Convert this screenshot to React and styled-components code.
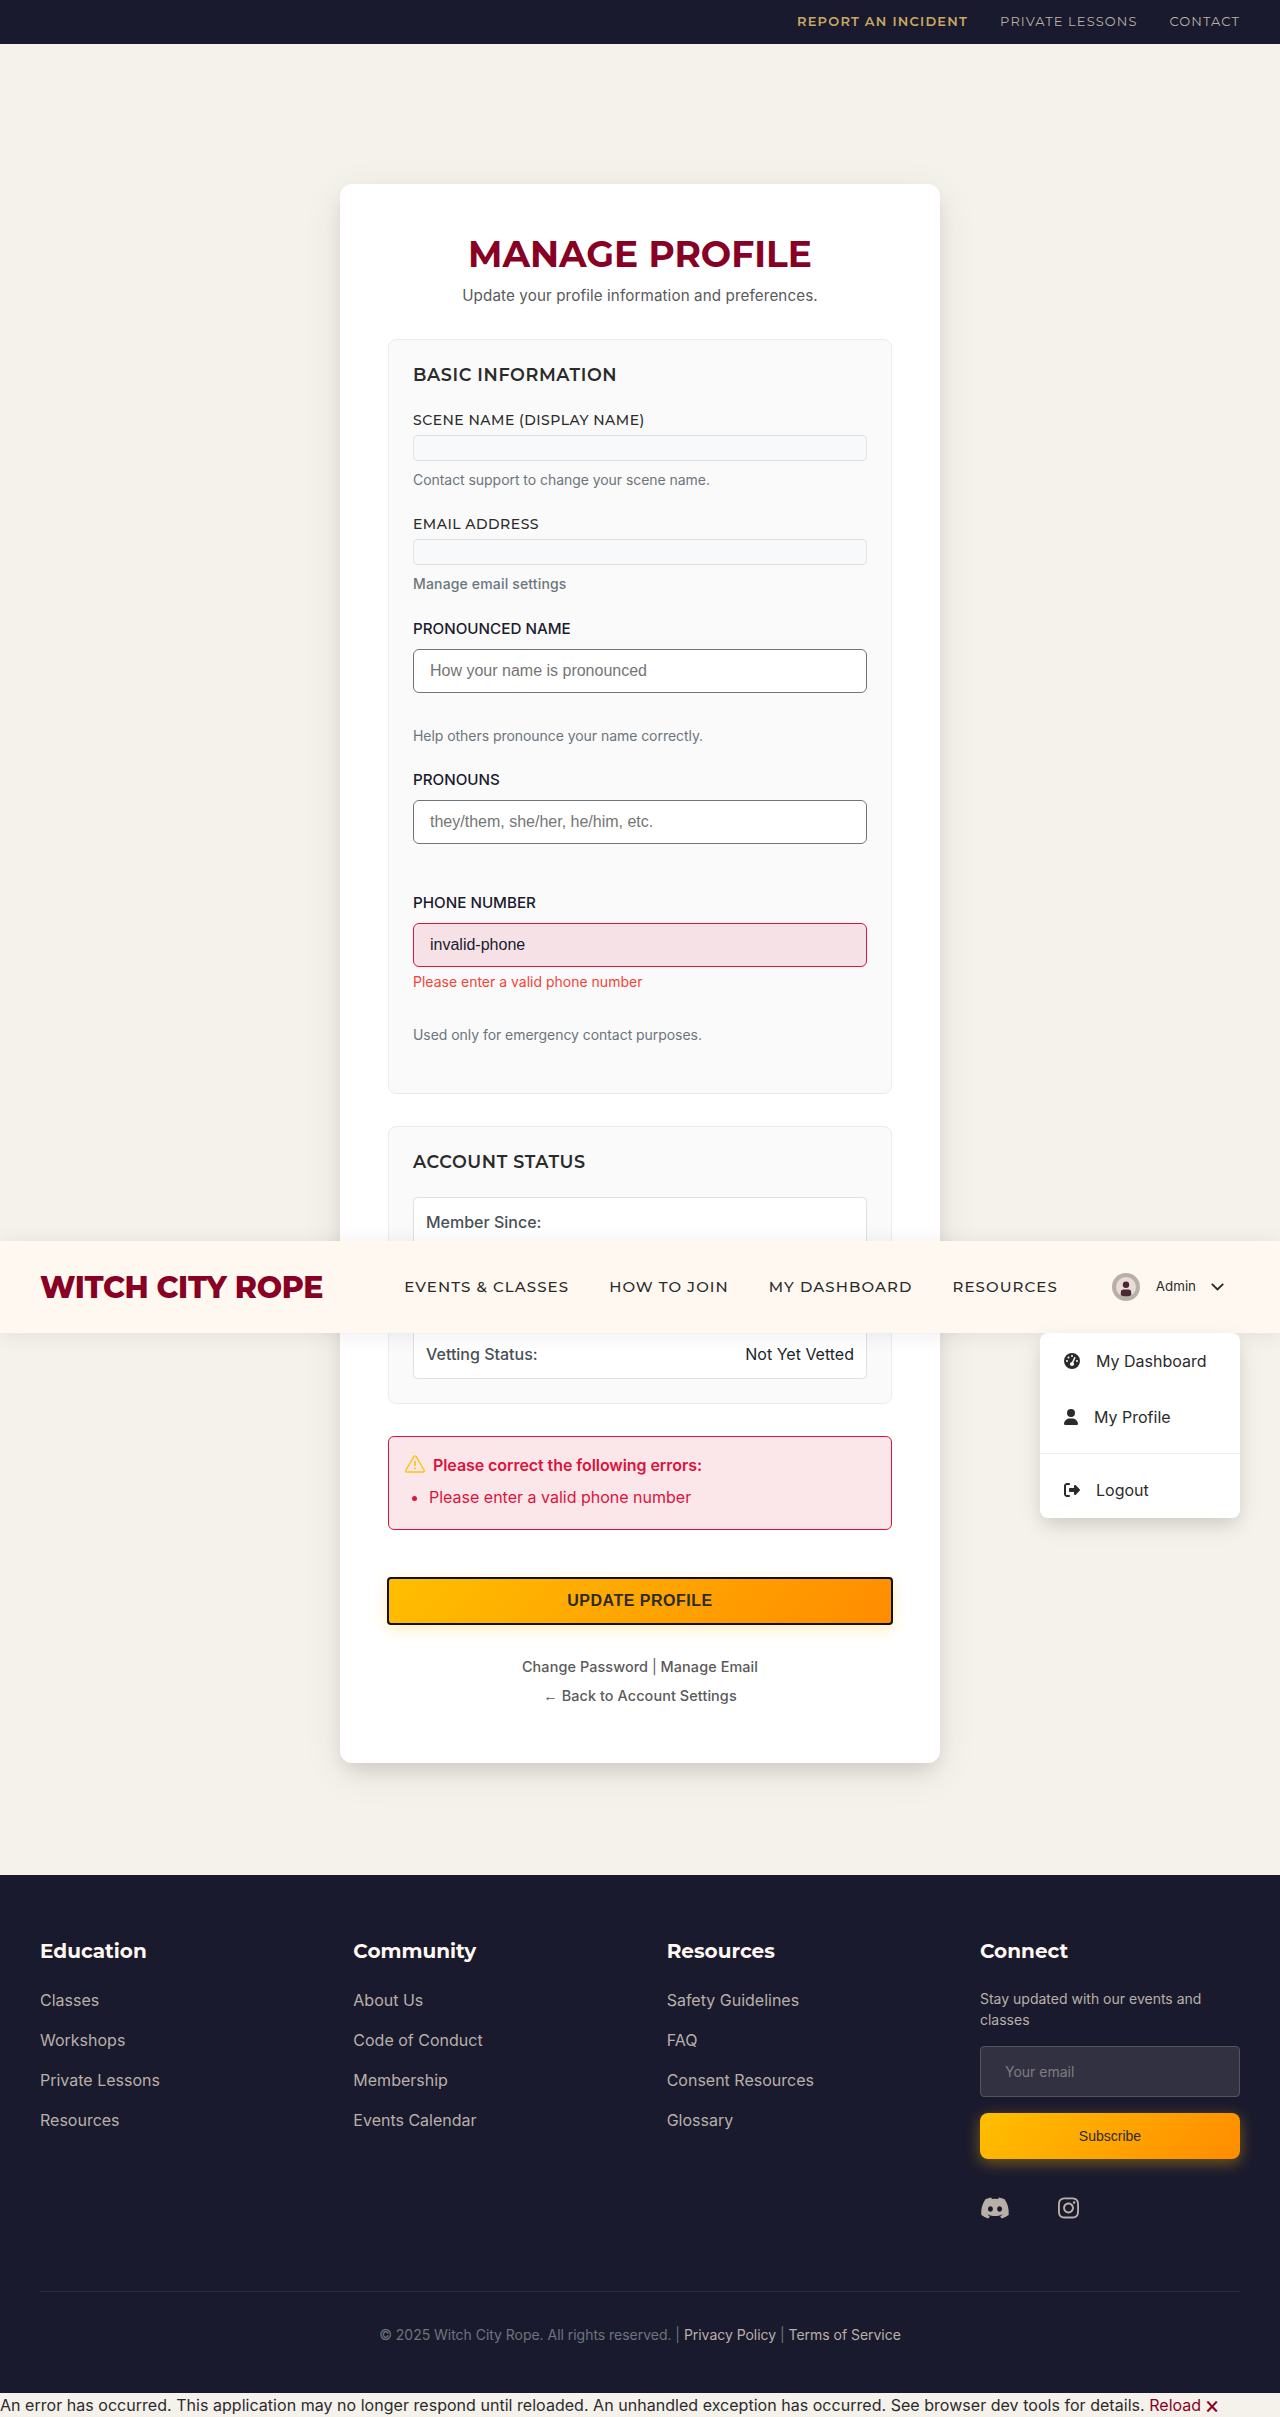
import React from 'react';
import styled, { createGlobalStyle } from 'styled-components';
import { FaGaugeHigh, FaUser, FaRightFromBracket, FaDiscord, FaInstagram } from 'react-icons/fa6';

const color = {
  burgundy: '#880124',
  midnight: '#1a1a2e',
  ivory: '#fff8f0',
  cream: '#f5f1eb',
  charcoal: '#2b2b2b',
  stone: '#b8b0a8',
  muted: '#6c757d',
  crimson: '#dc143c',
};
const heading = "Montserrat, 'Open Sans', sans-serif";
const bodyFont = "Inter, 'Open Sans', sans-serif";
const control = "'Liberation Sans', Arial, sans-serif";

const GlobalStyle = createGlobalStyle`
  *, *::before, *::after { box-sizing: border-box; }
  body { margin: 0; background: ${color.cream}; color: ${color.charcoal}; font: 400 16px/1.6 ${bodyFont}; }
  h1, h2, h3, p, ul { margin: 0; padding: 0; }
  a { color: inherit; text-decoration: none; }
`;

const Page = styled.div`
  position: relative;
  display: flex;
  flex-direction: column;
  min-height: 2417px;
  overflow: hidden;
`;

const UtilityBar = styled.div`
  height: 44px;
  padding: 0 40px 2px;
  display: flex;
  align-items: center;
  justify-content: flex-end;
  gap: 32px;
  background: ${color.midnight};
`;
const UtilityLink = styled.a`
  font: ${p => (p.$strong ? 600 : 400)} 13px/20px ${heading};
  letter-spacing: ${p => (p.$strong ? 1.22 : 1.08)}px;
  text-transform: uppercase;
  color: ${p => (p.$strong ? '#c9a961' : color.stone)};
`;

const Main = styled.main`
  display: flex;
  justify-content: center;
  padding: 140px 0 112px;
`;
const Card = styled.section`
  width: 600px;
  height: 1579px;
  padding: 48px;
  display: flex;
  flex-direction: column;
  background: #fff;
  border-radius: 12px;
  box-shadow: 0 10px 40px rgba(0, 0, 0, 0.08), 0 10px 20px -5px rgba(0, 0, 0, 0.12);
`;
const CardHeader = styled.header`
  height: 107px;
  text-align: center;
`;
const Title = styled.h1`
  font: 700 36px/44px ${heading};
  text-transform: uppercase;
  color: ${color.burgundy};
`;
const Subtitle = styled.p`
  margin-top: 8px;
  font-size: 15.2px;
  line-height: 24px;
  letter-spacing: 0.11px;
  color: #5a5a5a;
`;

const Panel = styled.div`
  height: ${p => p.$height}px;
  flex-shrink: 0;
  margin-bottom: 32px;
  padding: 23px 24px;
  background: #fafafa;
  border: 1px solid #e9ecef;
  border-radius: 8px;
`;
const PanelTitle = styled.h3`
  font: 600 17.6px/24px ${heading};
  letter-spacing: 0.6px;
  text-transform: uppercase;
`;

const ReadOnlyField = styled.div`
  height: 104px;
  display: flex;
  flex-direction: column;
`;
const ReadOnlyStack = styled.div`
  margin-top: 22px;
`;
const ReadOnlyLabel = styled.label`
  margin-bottom: 4px;
  font: 500 14px/22px ${heading};
  letter-spacing: 0.48px;
  text-transform: uppercase;
`;
const ReadOnlyValue = styled.div`
  height: 26px;
  margin-bottom: 8px;
  background: #f8f9fa;
  border: 1px solid #dee2e6;
  border-radius: 4px;
`;
const Hint = styled.p`
  font-size: 14px;
  line-height: 22px;
  font-weight: ${p => (p.$strong ? 500 : 400)};
  letter-spacing: ${p => (p.$strong ? 0.16 : -0.05)}px;
  color: ${color.muted};
`;

const Field = styled.div`
  height: ${p => p.$height}px;
  display: flex;
  flex-direction: column;
`;
const FieldLabel = styled.label`
  margin-bottom: 8px;
  font-size: 15.2px;
  line-height: 24px;
  font-weight: 500;
  text-transform: uppercase;
  color: ${color.midnight};
`;
const TextInput = styled.input`
  height: 44px;
  flex-shrink: 0;
  padding: 0 16px;
  margin-bottom: ${p => p.$gap}px;
  font: 400 16px ${control};
  color: ${color.midnight};
  background: ${p => (p.$invalid ? '#f6e1e6' : '#fff')};
  border: 1px solid ${p => (p.$invalid ? color.crimson : color.muted)};
  border-radius: 6px;
  outline: none;
  &::placeholder { color: #757575; }
`;
const FieldError = styled.p`
  margin-bottom: 31px;
  font-size: 14px;
  line-height: 22px;
  color: #f44336;
`;

const StatusList = styled.div`
  height: 182px;
  margin-top: 23px;
  padding: 12px 12px 10px;
  display: flex;
  flex-direction: column;
  justify-content: space-between;
  background: #fff;
  border: 1px solid #dee2e6;
  border-radius: 4px;
`;
const StatusRow = styled.div`
  display: flex;
  justify-content: space-between;
`;
const StatusLabel = styled.span`
  font-weight: 500;
  color: #495057;
`;
const StatusValue = styled.span`
  color: #212529;
`;

const ErrorSummary = styled.div`
  height: 94px;
  flex-shrink: 0;
  padding: 15px 16px;
  background: #fbe6ea;
  border: 1px solid ${color.crimson};
  border-radius: 6px;
  color: ${color.crimson};
`;
const SummaryTitle = styled.div`
  display: flex;
  align-items: center;
  gap: 8px;
  font-weight: 600;
  line-height: 26px;
  letter-spacing: -0.07px;
  svg { flex-shrink: 0; margin-top: -2px; }
`;
const SummaryList = styled.ul`
  margin-top: 7px;
  padding-left: 24px;
`;

const PrimaryButton = styled.button`
  display: block;
  width: 100%;
  height: 46px;
  flex-shrink: 0;
  padding: 0;
  border: 0;
  font: ${p => (p.$large ? '600 16px' : '400 14px')} ${control};
  letter-spacing: ${p => (p.$large ? '0.5px' : '0')};
  text-transform: ${p => (p.$large ? 'uppercase' : 'none')};
  color: ${color.charcoal};
  background: linear-gradient(135deg, #ffbf00 0%, #ff8c00 100%);
  border-radius: ${p => (p.$large ? 3 : 8)}px;
  outline: ${p => (p.$large ? '2px solid #101010' : 'none')};
  outline-offset: -1px;
  box-shadow: 0 4px 15px rgba(255, 191, 0, ${p => (p.$large ? 0.3 : 0.4)});
  margin-top: ${p => (p.$large ? 48 : 16)}px;
`;
const CardLinks = styled.div`
  margin-top: 28px;
  text-align: center;
  font-size: 14.4px;
  font-weight: 500;
  line-height: 29px;
  color: #5a5a5a;
`;
const CardLink = styled.a`
  letter-spacing: 0.1px;
`;
const Separator = styled.span`
  font-weight: 400;
`;
const Arrow = styled.span`
  font-family: 'Liberation Sans', sans-serif;
  line-height: 1;
`;

const NavBar = styled.nav`
  position: absolute;
  top: 1241px;
  left: 0;
  right: 0;
  height: 92px;
  padding: 0 40px;
  display: flex;
  align-items: center;
  background: ${color.ivory};
  box-shadow: 0 2px 20px rgba(0, 0, 0, 0.08);
`;
const Brand = styled.a`
  padding-top: 2px;
  font: 800 30px/40px ${heading};
  letter-spacing: -0.37px;
  color: ${color.burgundy};
`;
const NavLinks = styled.div`
  margin-left: auto;
  display: flex;
  gap: 40px;
`;
const NavLink = styled.a`
  font: 500 15px/24px ${heading};
  letter-spacing: 1.08px;
  text-transform: uppercase;
`;
const UserButton = styled.div`
  margin-left: 54px;
  padding-right: 16px;
  display: flex;
  align-items: center;
  font-size: 13.333px;
`;
const Avatar = styled.svg`
  margin-right: 16px;
`;
const Chevron = styled.svg`
  margin-left: 15px;
`;

const Menu = styled.div`
  position: absolute;
  top: 92px;
  right: 40px;
  width: 200px;
  height: 185px;
  background: #fff;
  border-radius: 8px;
  box-shadow: 0 8px 30px rgba(0, 0, 0, 0.06), 0 8px 18px -3px rgba(0, 0, 0, 0.12);
`;
const MenuItem = styled.a`
  height: 56px;
  padding: 0 24px;
  display: flex;
  align-items: center;
  gap: 16px;
`;
const MenuText = styled.span`
  padding-top: 2px;
`;
const MenuDivider = styled.div`
  height: 1px;
  margin: 8px 0;
  background: #f3efea;
`;
const PersonIcon = styled(FaUser)`
  width: 14px;
  height: 16px;
`;

const Footer = styled.footer`
  height: 518px;
  padding: 64px 40px 0;
  background: ${color.midnight};
  color: ${color.stone};
`;
const FooterGrid = styled.div`
  height: 353px;
  display: grid;
  grid-template-columns: repeat(4, 260px);
  justify-content: space-between;
  border-bottom: 1px solid #2e2e40;
`;
const FooterColumn = styled.div`
  display: flex;
  flex-direction: column;
`;
const FooterTitle = styled.h4`
  margin: -4px 0 21px;
  font: 700 20px/32px ${heading};
  color: ${color.ivory};
`;
const FooterLink = styled.a`
  line-height: 24px;
  margin-bottom: 16px;
`;
const Blurb = styled.p`
  font-size: 14px;
  line-height: 21px;
  margin-bottom: 16px;
`;
const EmailInput = styled.input`
  height: 51px;
  padding: 0 24px;
  font: 400 14px ${bodyFont};
  color: ${color.ivory};
  background: #323141;
  border: 1px solid #56535e;
  border-radius: 4px;
  &::placeholder { color: #7f7c80; }
`;
const Social = styled.div`
  margin-top: 37px;
  display: flex;
  gap: 48px;
`;
const DiscordIcon = styled(FaDiscord)`
  width: 30px;
  height: 24px;
`;
const InstagramIcon = styled(FaInstagram)`
  width: 21px;
  height: 24px;
`;
const Legal = styled.p`
  margin-top: 32px;
  text-align: center;
  font-size: 14px;
  line-height: 22px;
  letter-spacing: -0.03px;
  color: ${color.muted};
  a { color: ${color.stone}; }
`;

const ErrorStrip = styled.div`
  height: 24px;
  line-height: 24px;
  letter-spacing: 0.033px;
  white-space: nowrap;
  a { color: ${color.burgundy}; }
`;

const footerColumns = [
  ['Education', ['Classes', 'Workshops', 'Private Lessons', 'Resources']],
  ['Community', ['About Us', 'Code of Conduct', 'Membership', 'Events Calendar']],
  ['Resources', ['Safety Guidelines', 'FAQ', 'Consent Resources', 'Glossary']],
];

export default function App() {
  return (
    <Page>
      <GlobalStyle />
      <UtilityBar>
        <UtilityLink $strong>Report an Incident</UtilityLink>
        <UtilityLink>Private Lessons</UtilityLink>
        <UtilityLink>Contact</UtilityLink>
      </UtilityBar>

      <Main>
        <Card>
          <CardHeader>
            <Title>Manage Profile</Title>
            <Subtitle>Update your profile information and preferences.</Subtitle>
          </CardHeader>

          <Panel $height={755}>
            <PanelTitle>Basic Information</PanelTitle>
            <ReadOnlyStack>
              <ReadOnlyField>
                <ReadOnlyLabel>Scene Name (Display Name)</ReadOnlyLabel>
                <ReadOnlyValue />
                <Hint>Contact support to change your scene name.</Hint>
              </ReadOnlyField>
              <ReadOnlyField>
                <ReadOnlyLabel>Email Address</ReadOnlyLabel>
                <ReadOnlyValue />
                <Hint $strong>Manage email settings</Hint>
              </ReadOnlyField>
            </ReadOnlyStack>
            <Field $height={151.4}>
              <FieldLabel>Pronounced Name</FieldLabel>
              <TextInput $gap={32} placeholder="How your name is pronounced" />
              <Hint>Help others pronounce your name correctly.</Hint>
            </Field>
            <Field $height={122.6}>
              <FieldLabel>Pronouns</FieldLabel>
              <TextInput placeholder="they/them, she/her, he/him, etc." />
            </Field>
            <Field>
              <FieldLabel>Phone Number</FieldLabel>
              <TextInput $invalid $gap={4} defaultValue="invalid-phone" />
              <FieldError>Please enter a valid phone number</FieldError>
              <Hint>Used only for emergency contact purposes.</Hint>
            </Field>
          </Panel>

          <Panel $height={278}>
            <PanelTitle>Account Status</PanelTitle>
            <StatusList>
              <StatusRow>
                <StatusLabel>Member Since:</StatusLabel>
              </StatusRow>
              <StatusRow>
                <StatusLabel>Vetting Status:</StatusLabel>
                <StatusValue>Not Yet Vetted</StatusValue>
              </StatusRow>
            </StatusList>
          </Panel>

          <ErrorSummary>
            <SummaryTitle>
              <svg width="20" height="18" viewBox="0 0 20 18" fill="none" stroke="#ffc107" strokeWidth="1.3" strokeLinejoin="round">
                <path d="M9 1.4a1.2 1.2 0 0 1 2 0l8.1 13.8a1.2 1.2 0 0 1-1 1.8H1.9a1.2 1.2 0 0 1-1-1.8z" />
                <path d="M10 6v5M10 12.6v1.6" strokeWidth="1.6" />
              </svg>
              Please correct the following errors:
            </SummaryTitle>
            <SummaryList>
              <li>Please enter a valid phone number</li>
            </SummaryList>
          </ErrorSummary>

          <PrimaryButton $large>Update Profile</PrimaryButton>
          <CardLinks>
            <div>
              <CardLink>Change Password</CardLink> <Separator>|</Separator> <CardLink>Manage Email</CardLink>
            </div>
            <div>
              <CardLink><Arrow>←</Arrow> Back to Account Settings</CardLink>
            </div>
          </CardLinks>
        </Card>
      </Main>

      <Footer>
        <FooterGrid>
          {footerColumns.map(([title, links]) => (
            <FooterColumn key={title}>
              <FooterTitle>{title}</FooterTitle>
              {links.map(link => (
                <FooterLink key={link}>{link}</FooterLink>
              ))}
            </FooterColumn>
          ))}
          <FooterColumn>
            <FooterTitle>Connect</FooterTitle>
            <Blurb>Stay updated with our events and classes</Blurb>
            <EmailInput placeholder="Your email" />
            <PrimaryButton>Subscribe</PrimaryButton>
            <Social>
              <DiscordIcon />
              <InstagramIcon />
            </Social>
          </FooterColumn>
        </FooterGrid>
        <Legal>
          © 2025 Witch City Rope. All rights reserved. | <a>Privacy Policy</a> | <a>Terms of Service</a>
        </Legal>
      </Footer>

      <ErrorStrip>
        An error has occurred. This application may no longer respond until reloaded. An unhandled exception has
        occurred. See browser dev tools for details. <a>Reload</a> <a>🗙</a>
      </ErrorStrip>

      <NavBar>
        <Brand>WITCH CITY ROPE</Brand>
        <NavLinks>
          <NavLink>Events &amp; Classes</NavLink>
          <NavLink>How to Join</NavLink>
          <NavLink>My Dashboard</NavLink>
          <NavLink>Resources</NavLink>
        </NavLinks>
        <UserButton>
          <Avatar width="28" height="28" viewBox="0 0 28 28">
            <circle cx="14" cy="14" r="14" fill="#b8b0a8" />
            <circle cx="14" cy="14" r="10" fill="#e8ddd4" />
            <circle cx="14" cy="11.7" r="3.2" fill="#4a2639" />
            <path d="M8.8 20v-.6a2.8 2.8 0 0 1 2.8-2.8h4.8a2.8 2.8 0 0 1 2.8 2.8v2.9q-5.2 2.6-10.4 0z" fill="#4a2639" />
          </Avatar>
          Admin
          <Chevron width="13" height="8" viewBox="0 0 13 8" fill="none" stroke="#2b2b2b" strokeWidth="1.9">
            <path d="M.8.8l5.7 5.7L12.2.8" />
          </Chevron>
        </UserButton>
        <Menu>
          <MenuItem>
            <FaGaugeHigh size={16} />
            <MenuText>My Dashboard</MenuText>
          </MenuItem>
          <MenuItem>
            <PersonIcon />
            <MenuText>My Profile</MenuText>
          </MenuItem>
          <MenuDivider />
          <MenuItem>
            <FaRightFromBracket size={16} />
            <MenuText>Logout</MenuText>
          </MenuItem>
        </Menu>
      </NavBar>
    </Page>
  );
}
